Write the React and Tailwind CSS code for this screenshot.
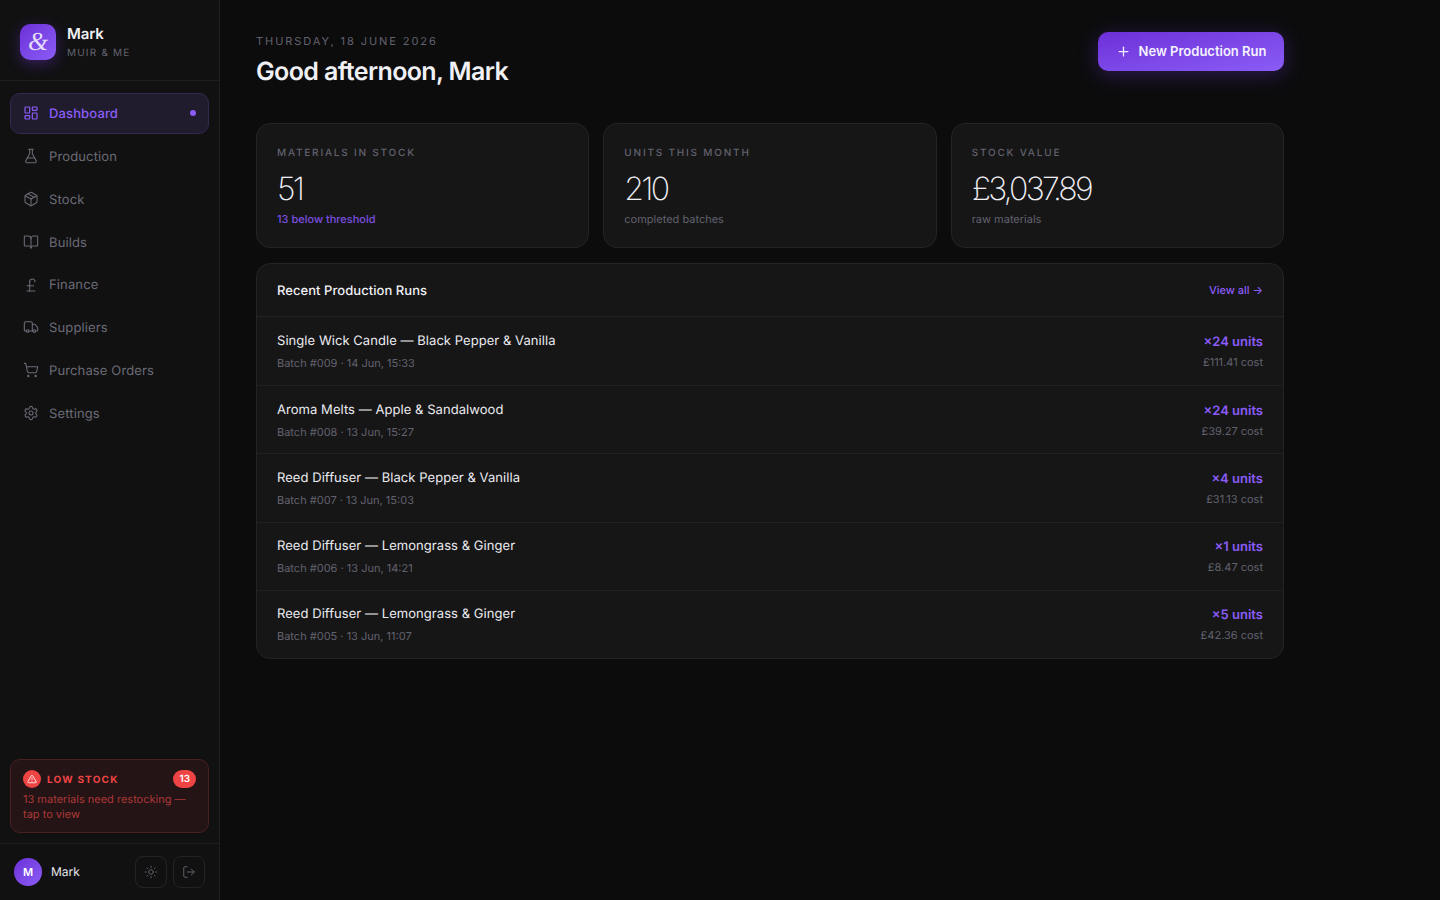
import React from 'react';
import { LayoutDashboard, FlaskConical, Package, BookOpen, PoundSterling, Truck, ShoppingCart, Settings, TriangleAlert, Sun, LogOut, Plus } from 'lucide-react';

const navItems = [
    { label: 'Dashboard', icon: LayoutDashboard, active: true },
    { label: 'Production', icon: FlaskConical },
    { label: 'Stock', icon: Package },
    { label: 'Builds', icon: BookOpen },
    { label: 'Finance', icon: PoundSterling },
    { label: 'Suppliers', icon: Truck },
    { label: 'Purchase Orders', icon: ShoppingCart },
    { label: 'Settings', icon: Settings },
];

const stats = [
    { label: 'MATERIALS IN STOCK', value: '51', note: '13 below threshold', accent: true },
    { label: 'UNITS THIS MONTH', value: '210', note: 'completed batches' },
    { label: 'STOCK VALUE', value: '£3,037.89', note: 'raw materials' },
];

const runs = [
    { name: 'Single Wick Candle — Black Pepper & Vanilla', meta: 'Batch #009 · 14 Jun, 15:33', units: '×24 units', cost: '£111.41 cost' },
    { name: 'Aroma Melts — Apple & Sandalwood', meta: 'Batch #008 · 13 Jun, 15:27', units: '×24 units', cost: '£39.27 cost' },
    { name: 'Reed Diffuser — Black Pepper & Vanilla', meta: 'Batch #007 · 13 Jun, 15:03', units: '×4 units', cost: '£31.13 cost' },
    { name: 'Reed Diffuser — Lemongrass & Ginger', meta: 'Batch #006 · 13 Jun, 14:21', units: '×1 units', cost: '£8.47 cost' },
    { name: 'Reed Diffuser — Lemongrass & Ginger', meta: 'Batch #005 · 13 Jun, 11:07', units: '×5 units', cost: '£42.36 cost' },
];

const Sidebar = () => (
    <aside className="w-[220px] h-[900px] shrink-0 flex flex-col bg-[#111112] border-r border-[#1f1f21]">
        <div className="h-[81px] shrink-0 flex items-center gap-[11px] px-5 pt-1 border-b border-[#1f1f21]">
            <div className="w-9 h-9 rounded-[10px] bg-gradient-to-br from-[#6d2fd8] to-[#8b5cf6] shadow-[0_4px_14px_rgba(124,58,237,0.35)] flex items-center justify-center">
                <span className="text-[26px] leading-none italic text-[#e4dcfa] font-['Liberation_Serif',serif]">&amp;</span>
            </div>
            <div>
                <div className="text-[15px] leading-[17px] font-semibold tracking-[-0.01em] text-[#f0f0f5]">Mark</div>
                <div className="text-[10px] leading-[14px] mt-[4px] tracking-[0.12em] text-[#63636e]">MUIR &amp; ME</div>
            </div>
        </div>

        <nav className="flex flex-col gap-[2px] px-[10px] pt-3">
            {navItems.map((item) => {
                const Icon = item.icon;
                return (
                    <div
                        key={item.label}
                        className={`h-[40.8px] flex items-center gap-[10px] px-3 rounded-[10px] border text-[13px] tracking-[0.01em] ${item.active
                            ? 'bg-[#201c2e] border-[#35284f] text-[#8b5cf6] font-medium'
                            : 'border-transparent text-[#6b6b76]'
                            }`}
                    >
                        <Icon size={16} strokeWidth={item.active ? 1.8 : 1.6} className="shrink-0" />
                        <span className="pt-[3px]">{item.label}</span>
                        {item.active && <span className="ml-auto w-[6px] h-[6px] rounded-full bg-[#8b5cf6]" />}
                    </div>
                );
            })}
        </nav>

        <div className="mt-auto px-[10px] pb-[10px]">
            <div className="h-[74px] rounded-[10px] border border-[#4a2022] bg-[#241415] px-3 pt-[10px]">
                <div className="flex items-center">
                    <span className="w-[18px] h-[18px] rounded-full bg-[#ef4444] flex items-center justify-center">
                        <TriangleAlert size={10} strokeWidth={2} className="text-white" />
                    </span>
                    <span className="ml-[6px] pt-[2px] text-[10px] font-bold tracking-[0.12em] text-[#ef4444]">LOW STOCK</span>
                    <span className="ml-auto h-[18px] px-[6px] rounded-full bg-[#ef4444] text-white text-[10px] font-semibold leading-[18px]">13</span>
                </div>
                <p className="mt-[4px] text-[11px] leading-[15px] text-[#ad3838]">13 materials need restocking — tap to view</p>
            </div>
        </div>

        <div className="h-[57px] shrink-0 flex items-center border-t border-[#1f1f21] pl-[14px] pr-[14px]">
            <div className="w-7 h-7 rounded-full bg-gradient-to-br from-[#6d2fd8] to-[#8b5cf6] flex items-center justify-center text-white text-[11px] font-semibold">M</div>
            <span className="ml-[9px] text-[12px] text-[#e6e6ec]">Mark</span>
            <div className="ml-auto flex gap-[6px]">
                <button className="w-8 h-8 rounded-lg border border-[#242426] flex items-center justify-center text-[#63636e]">
                    <Sun size={14} strokeWidth={1.6} />
                </button>
                <button className="w-8 h-8 rounded-lg border border-[#242426] flex items-center justify-center text-[#63636e]">
                    <LogOut size={14} strokeWidth={1.6} />
                </button>
            </div>
        </div>
    </aside>
);

const App = () => {
    return (
        <div className="flex w-full h-[900px] overflow-hidden bg-[#0c0c0d] font-['Inter',sans-serif] antialiased [text-rendering:geometricPrecision]">
            <Sidebar />
            <main className="flex-1 pl-9 pt-8">
                <div className="w-[1028px]">
                    <div className="flex items-start justify-between h-[91px]">
                        <div>
                            <div className="text-[11px] leading-[18px] tracking-[0.175em] text-[#62626e]">THURSDAY, 18 JUNE 2026</div>
                            <h1 className="mt-[5px] text-[25px] leading-[34px] font-semibold tracking-[-0.025em] text-[#f0f0f5]">Good afternoon, Mark</h1>
                        </div>
                        <button className="h-[39px] w-[186px] rounded-[10px] bg-gradient-to-br from-[#6d2fd8] to-[#8b5cf6] shadow-[0_4px_20px_rgba(124,58,237,0.3)] flex items-center justify-center gap-2 text-[13px] font-semibold text-[#f5f2ff]">
                            <Plus size={15} strokeWidth={2} />
                            New Production Run
                        </button>
                    </div>

                    <div className="grid grid-cols-3 gap-[14px]">
                        {stats.map((s) => (
                            <div key={s.label} className="h-[125px] rounded-[14px] border border-[#242426] bg-[#161617] px-5 pt-[22px]">
                                <div className="text-[10px] leading-[14px] font-medium tracking-[0.18em] text-[#62626e]">{s.label}</div>
                                <div className="mt-[10px] text-[32px] leading-[38px] font-extralight tracking-[-0.085em] text-[#f0f0f5]">{s.value}</div>
                                <div className={`mt-[3px] text-[11px] leading-[16px] ${s.accent ? 'text-[#7c4fe0] font-medium' : 'text-[#62626e]'}`}>{s.note}</div>
                            </div>
                        ))}
                    </div>

                    <div className="mt-[15px] rounded-[14px] border border-[#242426] bg-[#161617] overflow-hidden">
                        <div className="h-[53px] flex items-center justify-between px-5 border-b border-[#242426]">
                            <span className="pt-[4px] text-[13px] font-medium tracking-[0.004em] text-[#f0f0f5]">Recent Production Runs</span>
                            <span className="text-[11px] font-medium text-[#8b5cf6]">View all →</span>
                        </div>
                        {runs.map((run, i) => (
                            <div key={run.meta} className={`h-[68.2px] flex items-center justify-between px-5 ${i > 0 ? 'border-t border-[#202022]' : ''}`}>
                                <div className="pt-[1px]">
                                    <div className="text-[13px] leading-[18px] tracking-[0.004em] text-[#ebebf0]">{run.name}</div>
                                    <div className="mt-[5px] text-[11px] leading-[16px] text-[#62626e]">{run.meta}</div>
                                </div>
                                <div className="text-right pt-[1px]">
                                    <div className="text-[13px] leading-[18px] font-semibold text-[#8b5cf6]">{run.units}</div>
                                    <div className="mt-[3px] text-[11px] leading-[16px] text-[#62626e]">{run.cost}</div>
                                </div>
                            </div>
                        ))}
                    </div>
                </div>
            </main>
        </div>
    );
};

export default App;
